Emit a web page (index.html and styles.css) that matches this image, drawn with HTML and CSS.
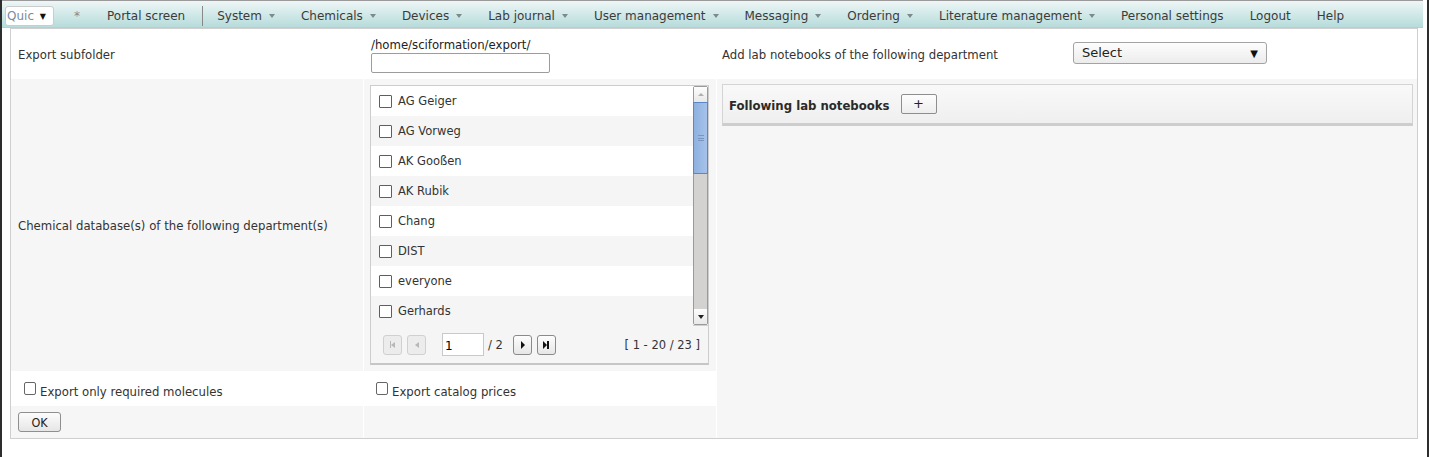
FILE: index.html
```html
<!DOCTYPE html>
<html>
<head>
<meta charset="utf-8">
<link rel="stylesheet" href="styles.css">
</head>
<body>
<div class="frame">
  <nav class="navbar">
    <div class="quick">Quic <span class="quick-arrow">▼</span></div>
    <span class="nav-item star">*</span>
    <span class="nav-item">Portal screen</span>
    <span class="nav-sep"></span>
    <span class="nav-item dd">System</span>
    <span class="nav-item dd">Chemicals</span>
    <span class="nav-item dd">Devices</span>
    <span class="nav-item dd">Lab journal</span>
    <span class="nav-item dd">User management</span>
    <span class="nav-item dd">Messaging</span>
    <span class="nav-item dd">Ordering</span>
    <span class="nav-item dd">Literature management</span>
    <span class="nav-item">Personal settings</span>
    <span class="nav-item">Logout</span>
    <span class="nav-item">Help</span>
  </nav>

  <form class="export-form">
    <div class="cell white label-cell">Export subfolder</div>
    <div class="cell white path-cell">
      <div class="path">/home/sciformation/export/</div>
      <input class="text-input" type="text">
    </div>
    <div class="cell white dept-cell">
      <span class="dept-label">Add lab notebooks of the following department</span>
      <div class="select-box"><span>Select</span><span class="sel-arrow">▼</span></div>
    </div>

    <div class="cell grey label-cell">Chemical database(s) of the following department(s)</div>
    <div class="cell grey list-cell">
      <div class="listbox">
        <div class="list-area">
          <div class="list-items">
            <label class="list-row"><input type="checkbox" class="cb"><span>AG Geiger</span></label>
            <label class="list-row alt"><input type="checkbox" class="cb"><span>AG Vorweg</span></label>
            <label class="list-row"><input type="checkbox" class="cb"><span>AK Gooßen</span></label>
            <label class="list-row alt"><input type="checkbox" class="cb"><span>AK Rubik</span></label>
            <label class="list-row"><input type="checkbox" class="cb"><span>Chang</span></label>
            <label class="list-row alt"><input type="checkbox" class="cb"><span>DIST</span></label>
            <label class="list-row"><input type="checkbox" class="cb"><span>everyone</span></label>
            <label class="list-row alt"><input type="checkbox" class="cb"><span>Gerhards</span></label>
          </div>
          <div class="scrollbar">
            <div class="sb-btn"><span class="sb-up"></span></div>
            <div class="sb-thumb"><span class="grip"></span></div>
            <div class="sb-track"></div>
            <div class="sb-btn"><span class="sb-down"></span></div>
          </div>
        </div>
        <div class="pager">
          <span class="pg-btn disabled"><span class="ic-first"></span></span>
          <span class="pg-btn disabled"><span class="ic-prev"></span></span>
          <input class="pg-input" type="text" value="1">
          <span class="pg-total">/ 2</span>
          <span class="pg-btn"><span class="ic-next"></span></span>
          <span class="pg-btn"><span class="ic-last"></span></span>
          <span class="pg-info">[ 1 - 20 / 23 ]</span>
        </div>
      </div>
    </div>
    <div class="cell grey notebooks-cell">
      <div class="nb-panel">
        <span class="nb-title">Following lab notebooks</span>
        <span class="plus-btn">+</span>
      </div>
    </div>

    <div class="cell white check-cell"><label><input type="checkbox" class="cb small"><span>Export only required molecules</span></label></div>
    <div class="cell white check-cell"><label><input type="checkbox" class="cb small"><span>Export catalog prices</span></label></div>

    <div class="cell grey ok-cell"><button type="button" class="ok-btn">OK</button></div>
    <div class="cell grey"></div>
  </form>
</div>
</body>
</html>
```

FILE: styles.css
```css
* { box-sizing: border-box; }
html, body { margin: 0; padding: 0; background: #fff; }
body { font-family: "DejaVu Sans", Verdana, sans-serif; color: #333; }

.frame {
  min-height: 457px;
  border-left: 2px solid #2d2d2d;
  border-right: 2px solid #2d2d2d;
}

/* NAVBAR */
.navbar {
  display: flex;
  align-items: center;
  height: 28px;
  margin-right: 4px;
  border-top: 1px solid #9a9a9a;
  border-bottom: 1px solid #c8c8c8;
  background: linear-gradient(#eef6f6, #b6dcdb);
  font-size: 12px;
  color: #3b3b3b;
  padding: 3px 0 0 3px;
}
.quick {
  width: 49px;
  height: 20px;
  background: #fff;
  border: 1px solid #ccc;
  border-radius: 3px;
  color: #7a8a9c;
  font-size: 12px;
  line-height: 18px;
  padding-left: 1px;
  white-space: nowrap;
  margin-right: 6px;
}
.quick-arrow { color: #111; font-size: 8px; margin-left: 2px; vertical-align: 1px; }
.nav-item { padding: 0 13px; white-space: nowrap; }
.nav-item.star { color: #888; padding: 0 14px 0 14px; margin-right: 0; }
.nav-item.dd::after {
  content: "";
  display: inline-block;
  margin-left: 7px;
  vertical-align: 2px;
  border-left: 3.5px solid transparent;
  border-right: 3.5px solid transparent;
  border-top: 4px solid #7c8a8a;
}
.nav-sep {
  width: 1px;
  height: 20px;
  background: #888;
  margin: 0 1px 0 4px;
}

/* FORM */
.export-form {
  display: grid;
  grid-template-columns: 352px 352px 1fr;
  grid-template-rows: 50px 292px 35px 32px;
  column-gap: 1px;
  margin: 0 9px 0 8px;
  border: 1px solid #cfcfcf;
  background: #fff;
  font-family: "DejaVu Sans Condensed", "DejaVu Sans", sans-serif;
  font-stretch: condensed;
  font-size: 13px;
  color: #333;
}
.cell { padding-left: 7px; }
.white { background: #fff; }
.grey { background: #f6f6f6; }
.label-cell { display: flex; align-items: center; }

.path-cell { padding: 8px 0 0 7px; }
.path { font-size: 13px; line-height: 16px; color: #222; }
.text-input {
  display: block;
  margin-top: 0;
  width: 179px;
  height: 20px;
  border: 1px solid #9c9c9c;
  border-radius: 2px;
  background: #fff;
  padding: 0;
}
.dept-cell { display: flex; align-items: center; padding-left: 5px; }
.dept-label { width: 351px; }
.select-box {
  display: flex;
  justify-content: space-between;
  align-items: center;
  width: 194px;
  height: 22px;
  border: 1px solid #a3a3a3;
  border-radius: 3px;
  background: linear-gradient(#fdfdfd, #ececec);
  font-family: "DejaVu Sans", sans-serif;
  font-stretch: normal;
  font-size: 13px;
  color: #222;
  padding: 0 8px 2px 8px;
  margin-top: -2px;
}
.sel-arrow { font-size: 10px; color: #111; padding-top: 3px; }

/* LIST */
.list-cell { padding: 6px 0 0 6px; }
.listbox {
  width: 339px;
  height: 280px;
  border: 1px solid #cdcdcd;
  border-bottom: 2px solid #c6c6c6;
  background: #f5f5f5;
  display: flex;
  flex-direction: column;
}
.list-area { display: flex; height: 240px; border-bottom: 1px solid #d0d0d0; }
.list-items { flex: 1; }
.list-row {
  display: flex;
  align-items: center;
  height: 30px;
  background: #fff;
  font-family: "DejaVu Sans", sans-serif;
  font-stretch: normal;
  font-size: 11.5px;
  color: #333;
  padding-left: 8px;
}
.list-row.alt { background: #f5f5f5; }
.cb {
  -webkit-appearance: none;
  appearance: none;
  width: 13px;
  height: 13px;
  margin: 0 6px 0 0;
  border: 1px solid #5e5e5e;
  border-radius: 1px;
  background: #fff;
  flex: none;
}
.scrollbar {
  width: 15px;
  display: flex;
  flex-direction: column;
  border: 1px solid #9a9a9a;
  border-radius: 2px;
  background: #d3d2d0;
}
.sb-btn {
  height: 15px;
  background: linear-gradient(#fdfdfd, #e8e8e8);
  display: flex;
  align-items: center;
  justify-content: center;
}
.sb-up { border-left: 3px solid transparent; border-right: 3px solid transparent; border-bottom: 3px solid #b0b0b0; }
.sb-down { border-left: 3px solid transparent; border-right: 3px solid transparent; border-top: 4px solid #222; }
.sb-thumb {
  height: 72px;
  background: linear-gradient(90deg, #8eb1e0, #a6c2ea);
  border: 1px solid #5c87c6;
  margin: 0 -1px;
  display: flex;
  align-items: center;
  justify-content: center;
}
.grip { width: 6px; height: 6px; border-top: 1px solid #7a95bd; border-bottom: 1px solid #7a95bd; position: relative; }
.grip::after { content: ""; position: absolute; left: 0; right: 0; top: 2px; border-top: 1px solid #7a95bd; }
.sb-track { flex: 1; }

.pager {
  flex: 1;
  display: flex;
  align-items: center;
  padding: 0 8px 0 12px;
  font-family: "DejaVu Sans", sans-serif;
  font-stretch: normal;
  font-size: 11.5px;
  color: #333;
}
.pg-btn {
  width: 19px;
  height: 20px;
  border: 1px solid #8a8a8a;
  border-radius: 3px;
  background: linear-gradient(#fdfdfd, #e6e6e6);
  display: flex;
  align-items: center;
  justify-content: center;
  margin-right: 5px;
}
.pg-btn.disabled { border-color: #d0d0d0; background: #ececec; }
.pg-btn.disabled + .pg-btn.disabled { margin-right: 16px; }
.ic-first, .ic-last { display: flex; align-items: center; }
.ic-first::before { content: ""; width: 1px; height: 7px; background: #b8b8b8; }
.ic-first::after { content: ""; border-top: 3.5px solid transparent; border-bottom: 3.5px solid transparent; border-right: 4px solid #b8b8b8; }
.ic-prev { border-top: 3.5px solid transparent; border-bottom: 3.5px solid transparent; border-right: 4px solid #b8b8b8; }
.ic-next { border-top: 4px solid transparent; border-bottom: 4px solid transparent; border-left: 4px solid #111; margin-left: 1px; }
.ic-last::before { content: ""; border-top: 4px solid transparent; border-bottom: 4px solid transparent; border-left: 4px solid #111; }
.ic-last::after { content: ""; width: 2px; height: 8px; background: #111; }
.pg-input {
  width: 42px;
  height: 23px;
  border: 1px solid #c9c9c9;
  background: #fff;
  font-family: "DejaVu Sans", sans-serif;
  font-size: 12px;
  padding: 2px 0 0 2px;
  margin: 0;
}
.pg-total { margin: 0 10px 0 4px; }
.pg-info { margin-left: auto; }

/* NOTEBOOKS */
.notebooks-cell { grid-row: 2 / 5; grid-column: 3; padding: 5px 4px 0 5px; }
.nb-panel {
  display: flex;
  align-items: center;
  height: 42px;
  border: 1px solid #d4d4d4;
  border-bottom: 3px solid #cdcdcd;
  background: linear-gradient(#f9f9f9, #efefef);
  padding-left: 6px;
}
.nb-title { font-weight: bold; font-size: 13px; color: #2a2a2a; margin-right: 11px; margin-top: 2px; }
.plus-btn {
  width: 36px;
  height: 20px;
  border: 1px solid #8e8e8e;
  border-radius: 2px;
  background: linear-gradient(#fdfdfd, #eeeeee);
  text-align: center;
  line-height: 18px;
  font-family: "DejaVu Sans", sans-serif;
  font-stretch: normal;
  font-size: 13px;
  color: #222;
}

/* CHECKS & OK */
.check-cell { display: flex; align-items: center; padding: 5px 0 0 12px; font-size: 13px; }
.check-cell + .check-cell { padding-left: 11px; }
.check-cell label { display: flex; align-items: center; }
.check-cell .cb.small { width: 12px; height: 13px; margin: -5px 4px 0 1px; border-color: #666; border-radius: 2px; }
.ok-cell { padding: 6px 0 0 7px; }
.ok-btn {
  width: 43px;
  height: 20px;
  border: 1px solid #8f8f8f;
  border-radius: 3px;
  background: linear-gradient(#fcfcfc, #e6e6e6);
  font-family: "DejaVu Sans Condensed", "DejaVu Sans", sans-serif;
  font-stretch: condensed;
  font-size: 12.5px;
  color: #222;
  padding: 0;
}
```
